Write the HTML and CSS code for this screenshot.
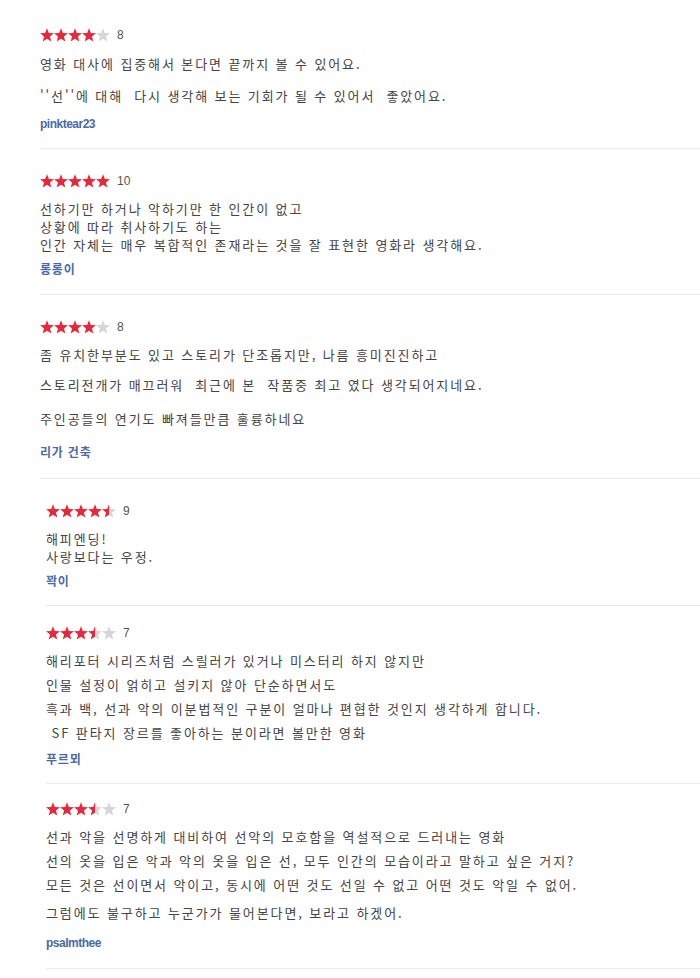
FILE: index.html
```html
<!DOCTYPE html>
<html lang="ko">
<head>
<meta charset="utf-8">
<title>리뷰</title>
<link rel="stylesheet" href="styles.css">
</head>
<body>
<svg class="defs" width="0" height="0" aria-hidden="true">
  <defs>
    <linearGradient id="half" x1="0" x2="1" y1="0" y2="0">
      <stop offset="50%" stop-color="#e8283a"/>
      <stop offset="50%" stop-color="#d6d6d6"/>
    </linearGradient>
    <symbol id="star" viewBox="0 0 14 14">
      <path d="M7 0.3 L8.82 5.09 L13.94 5.34 L9.95 8.56 L11.29 13.51 L7 10.7 L2.71 13.51 L4.05 8.56 L0.06 5.34 L5.18 5.09 Z"/>
    </symbol>
  </defs>
</svg>

<div class="reviews">

  <div class="review r1">
    <div class="rating">
      <svg class="stars" width="70" height="14" viewBox="0 0 70 14">
        <use href="#star" x="0" width="14" height="14" class="on"/>
        <use href="#star" x="14" width="14" height="14" class="on"/>
        <use href="#star" x="28" width="14" height="14" class="on"/>
        <use href="#star" x="42" width="14" height="14" class="on"/>
        <use href="#star" x="56" width="14" height="14" class="off"/>
      </svg>
      <span class="score">8</span>
    </div>
    <p class="line m12">영화 대사에 집중해서 본다면 끝까지 볼 수 있어요.</p>
    <p class="line m14">''선''에 대해&nbsp; 다시 생각해 보는 기회가 될 수 있어서&nbsp; 좋았어요.</p>
    <div class="user m11">pinktear23</div>
  </div>

  <div class="review r2">
    <div class="rating">
      <svg class="stars" width="70" height="14" viewBox="0 0 70 14">
        <use href="#star" x="0" width="14" height="14" class="on"/>
        <use href="#star" x="14" width="14" height="14" class="on"/>
        <use href="#star" x="28" width="14" height="14" class="on"/>
        <use href="#star" x="42" width="14" height="14" class="on"/>
        <use href="#star" x="56" width="14" height="14" class="on"/>
      </svg>
      <span class="score">10</span>
    </div>
    <p class="line m11">선하기만 하거나 악하기만 한 인간이 없고</p>
    <p class="line">상황에 따라 취사하기도 하는</p>
    <p class="line">인간 자체는 매우 복합적인 존재라는 것을 잘 표현한 영화라 생각해요.</p>
    <div class="user ko m7">롱롱이</div>
  </div>

  <div class="review r3">
    <div class="rating">
      <svg class="stars" width="70" height="14" viewBox="0 0 70 14">
        <use href="#star" x="0" width="14" height="14" class="on"/>
        <use href="#star" x="14" width="14" height="14" class="on"/>
        <use href="#star" x="28" width="14" height="14" class="on"/>
        <use href="#star" x="42" width="14" height="14" class="on"/>
        <use href="#star" x="56" width="14" height="14" class="off"/>
      </svg>
      <span class="score">8</span>
    </div>
    <p class="line m11">좀 유치한부분도 있고 스토리가 단조롭지만, 나름 흥미진진하고</p>
    <p class="line m12">스토리전개가 매끄러워&nbsp; 최근에 본&nbsp; 작품중 최고 였다 생각되어지네요.</p>
    <p class="line m16">주인공들의 연기도 빠져들만큼 훌륭하네요</p>
    <div class="user ko m16">리가 건축</div>
  </div>

  <div class="review r4 inset">
    <div class="rating">
      <svg class="stars" width="70" height="14" viewBox="0 0 70 14">
        <use href="#star" x="0" width="14" height="14" class="on"/>
        <use href="#star" x="14" width="14" height="14" class="on"/>
        <use href="#star" x="28" width="14" height="14" class="on"/>
        <use href="#star" x="42" width="14" height="14" class="on"/>
        <use href="#star" x="56" width="14" height="14" class="half"/>
      </svg>
      <span class="score">9</span>
    </div>
    <p class="line m11">해피엔딩!</p>
    <p class="line">사랑보다는 우정.</p>
    <div class="user ko m7">꽉이</div>
  </div>

  <div class="review r5 inset">
    <div class="rating">
      <svg class="stars" width="70" height="14" viewBox="0 0 70 14">
        <use href="#star" x="0" width="14" height="14" class="on"/>
        <use href="#star" x="14" width="14" height="14" class="on"/>
        <use href="#star" x="28" width="14" height="14" class="on"/>
        <use href="#star" x="42" width="14" height="14" class="half"/>
        <use href="#star" x="56" width="14" height="14" class="off"/>
      </svg>
      <span class="score">7</span>
    </div>
    <p class="line m11">해리포터 시리즈처럼 스릴러가 있거나 미스터리 하지 않지만</p>
    <p class="line m6">인물 설정이 얽히고 설키지 않아 단순하면서도</p>
    <p class="line m6">흑과 백, 선과 악의 이분법적인 구분이 얼마나 편협한 것인지 생각하게 합니다.</p>
    <p class="line m6">&nbsp;SF 판타지 장르를 좋아하는 분이라면 볼만한 영화</p>
    <div class="user ko m9">푸르뫼</div>
  </div>

  <div class="review r6 inset">
    <div class="rating">
      <svg class="stars" width="70" height="14" viewBox="0 0 70 14">
        <use href="#star" x="0" width="14" height="14" class="on"/>
        <use href="#star" x="14" width="14" height="14" class="on"/>
        <use href="#star" x="28" width="14" height="14" class="on"/>
        <use href="#star" x="42" width="14" height="14" class="half"/>
        <use href="#star" x="56" width="14" height="14" class="off"/>
      </svg>
      <span class="score">7</span>
    </div>
    <p class="line m11">선과 악을 선명하게 대비하여 선악의 모호함을 역설적으로 드러내는 영화</p>
    <p class="line m6">선의 옷을 입은 악과 악의 옷을 입은 선, 모두 인간의 모습이라고 말하고 싶은 거지?</p>
    <p class="line m6">모든 것은 선이면서 악이고, 동시에 어떤 것도 선일 수 없고 어떤 것도 악일 수 없어.</p>
    <p class="line m10">그럼에도 불구하고 누군가가 물어본다면, 보라고 하겠어.</p>
    <div class="user m13">psalmthee</div>
  </div>

</div>
</body>
</html>
```

FILE: styles.css
```css
html, body {
  margin: 0;
  padding: 0;
  background: #ffffff;
}

body {
  font-family: "Noto Sans CJK KR", "Noto Sans", sans-serif;
  color: #444444;
  font-size: 13px;
}

.defs {
  position: absolute;
  width: 0;
  height: 0;
  overflow: hidden;
}

.reviews {
  padding-top: 27px;
}

.review {
  margin-left: 40px;
  border-bottom: 1px solid #ececec;
}

.review.inset {
  margin-left: 46px;
}

.r1 { padding-bottom: 16px; }
.r2 { padding-top: 24px; padding-bottom: 17px; }
.r3 { padding-top: 24px; padding-bottom: 18px; }
.r4 { padding-top: 24px; padding-bottom: 16px; }
.r5 { padding-top: 19px; padding-bottom: 16px; }
.r6 { padding-top: 17px; padding-bottom: 17px; }

.rating {
  display: flex;
  align-items: center;
  height: 16px;
  gap: 7px;
}

.stars {
  display: block;
}

.stars .on { fill: #e8283a; }
.stars .off { fill: #d6d6d6; }
.stars .half { fill: url(#half); }

.score {
  font-family: "Liberation Sans", Arial, sans-serif;
  font-size: 12px;
  color: #555555;
  line-height: 16px;
}

.line {
  margin: 0;
  height: 18px;
  line-height: 18px;
  font-size: 13px;
  letter-spacing: 1.9px;
  white-space: nowrap;
}

.user {
  height: 16px;
  line-height: 16px;
  font-family: "Liberation Sans", "Noto Sans CJK KR", sans-serif;
  font-size: 12px;
  font-weight: bold;
  color: #4a6aa6;
  letter-spacing: -0.5px;
}

.user.ko {
  font-family: "Noto Sans CJK KR", sans-serif;
  letter-spacing: 0.8px;
}

.m6 { margin-top: 6px; }
.m7 { margin-top: 7px; }
.m9 { margin-top: 9px; }
.m10 { margin-top: 10px; }
.m11 { margin-top: 11px; }
.m12 { margin-top: 12px; }
.m13 { margin-top: 13px; }
.m14 { margin-top: 14px; }
.m16 { margin-top: 16px; }
```
